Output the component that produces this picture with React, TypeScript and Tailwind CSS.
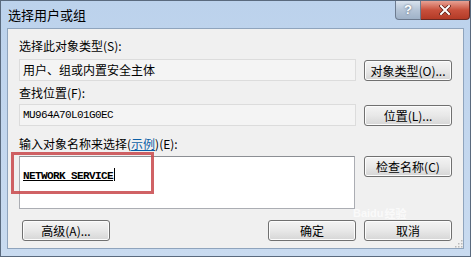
const cjk = { fontFamily: '"Noto Sans CJK SC", "Liberation Sans", sans-serif' };
const mono = { fontFamily: '"Liberation Mono", "Noto Sans CJK SC", monospace' };

function Btn({ children, className = '' }: { children: React.ReactNode; className?: string }) {
  return (
    <button
      className={`flex h-[21px] w-[88px] items-center justify-center rounded-[3px] border border-[#707070] bg-gradient-to-b from-[#f4f4f4] via-[#e8e8e8] to-[#d6d6d6] text-[12px] leading-none text-black shadow-[inset_0_0_0_1px_#fcfcfc] ${className}`}
      style={cjk}
    >
      {children}
    </button>
  );
}

function Field({ children }: { children: React.ReactNode }) {
  return (
    <div
      className="flex h-[22px] w-[337px] items-center border border-[#dcdcdc] bg-[#f4f4f4] pl-[3px] text-[12px] text-black"
      style={cjk}
    >
      {children}
    </div>
  );
}

export default function App() {
  return (
    <div className="relative h-[257px] w-[471px] overflow-hidden border border-[#5a6a7e] bg-gradient-to-b from-[#bcd2ec] to-[#c9dbf0]">
      <div className="flex h-[27px] items-center justify-between">
        <span className="pl-[7px] text-[13px] text-black" style={cjk}>
          选择用户或组
        </span>
        <div className="flex self-start">
          <div className="flex h-[19px] w-[26px] items-center justify-center rounded-bl-[4px] border border-t-0 border-[#6d7b8f] bg-gradient-to-b from-[#d9e3ee] via-[#b5c4d6] to-[#9fb2c8] text-[13px] font-bold text-white [text-shadow:0_0_2px_#44556a]" style={{ fontFamily: '"Liberation Sans", sans-serif' }}>
            ?
          </div>
          <div className="flex h-[19px] w-[49px] items-center justify-center rounded-br-[4px] border border-l-0 border-t-0 border-[#6a2a24] bg-gradient-to-b from-[#e7a194] via-[#c8503c] to-[#b33a26]">
            <svg width="12" height="10" viewBox="0 0 12 10">
              <path d="M2 1 L10 9 M10 1 L2 9" stroke="#5a1a12" strokeWidth="3.4" strokeLinecap="square" />
              <path d="M2 1 L10 9 M10 1 L2 9" stroke="#ffffff" strokeWidth="2" strokeLinecap="square" />
            </svg>
          </div>
        </div>
      </div>

      <div className="mx-[6px] h-[221px] border border-[#8fa4bd] bg-[#f0f0f0] pl-[11px] pt-[9px]">
        <div className="h-[16px] text-[12px] leading-[16px] text-black" style={cjk}>
          选择此对象类型(S):
        </div>
        <div className="mt-[5px] flex items-end">
          <Field>用户、组或内置安全主体</Field>
          <Btn className="ml-[8px]">对象类型(O)...</Btn>
        </div>

        <div className="mt-[4px] h-[16px] text-[12px] leading-[16px] text-black" style={cjk}>
          查找位置(F):
        </div>
        <div className="mt-[3px] flex items-end">
          <Field>
            <span className="text-[11px] tracking-[-0.6px]" style={mono}>
              MU964A70L01G0EC
            </span>
          </Field>
          <Btn className="ml-[8px]">位置(L)...</Btn>
        </div>

        <div className="mt-[10px] h-[16px] text-[12px] leading-[16px] text-black" style={cjk}>
          输入对象名称来选择(<span className="text-[#0b5fa6] underline">示例</span>)(E):
        </div>
        <div className="mt-[4px] flex items-start">
          <div className="h-[53px] w-[336px] border border-[#abadb3] border-t-[#8c8f94] bg-white pl-[3px] pt-[4px]">
            <span className="text-[11px] font-bold tracking-[-0.6px] text-black underline" style={mono}>
              NETWORK SERVICE
            </span>
            <span className="ml-[1px] inline-block h-[13px] w-px translate-y-[2px] bg-black" />
          </div>
          <Btn className="ml-[9px]">检查名称(C)</Btn>
        </div>

        <div className="mt-[11px] flex">
          <Btn className="ml-[3px] w-[86px]">高级(A)...</Btn>
          <Btn className="ml-auto w-[73px]">确定</Btn>
          <Btn className="ml-[8px] mr-[11px] w-[73px]">取消</Btn>
        </div>
      </div>

      <div className="pointer-events-none absolute left-[352px] top-[206px] flex h-[12px] items-center gap-[1px] text-[11px] font-bold leading-none text-white/70" style={{ fontFamily: '"Liberation Sans", sans-serif' }}>
        <span>Baidu</span>
        <span style={cjk}>经验</span>
      </div>

      <svg className="absolute left-[454px] top-[239px]" width="8" height="8" viewBox="0 0 8 8">
        <rect x="6" y="0" width="1.5" height="1.5" fill="#b9b9b9" />
        <rect x="3" y="3" width="1.5" height="1.5" fill="#b9b9b9" />
        <rect x="6" y="3" width="1.5" height="1.5" fill="#b9b9b9" />
        <rect x="0" y="6" width="1.5" height="1.5" fill="#b9b9b9" />
        <rect x="3" y="6" width="1.5" height="1.5" fill="#b9b9b9" />
        <rect x="6" y="6" width="1.5" height="1.5" fill="#b9b9b9" />
      </svg>

      <div className="pointer-events-none absolute left-[10px] top-[151px] h-[42px] w-[143px] border-[3px] border-[#c8464a]/85" />
    </div>
  );
}
